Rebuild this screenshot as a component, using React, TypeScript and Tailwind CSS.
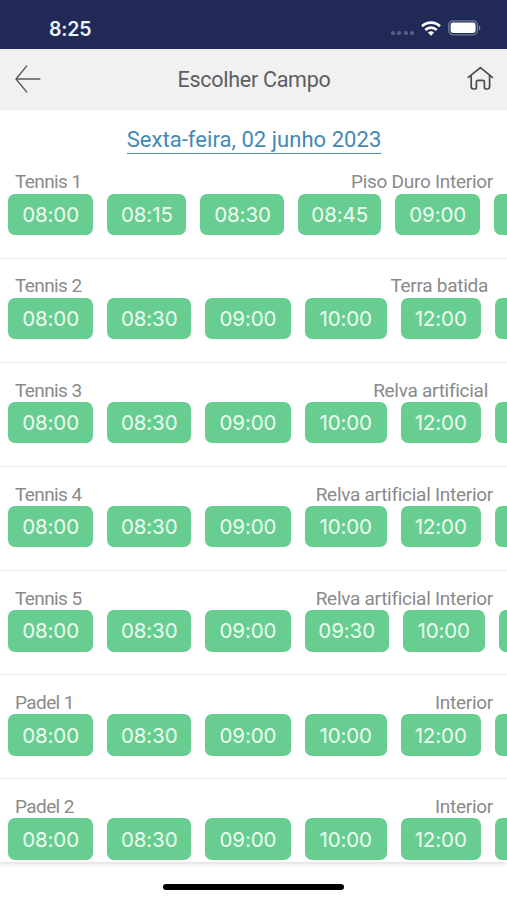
import clsx from 'clsx';

const courts = [
  {
    name: 'Tennis 1',
    surface: 'Piso Duro Interior',
    slots: ['08:00', '08:15', '08:30', '08:45', '09:00'],
  },
  {
    name: 'Tennis 2',
    surface: 'Terra batida',
    inset: true,
    slots: ['08:00', '08:30', '09:00', '10:00', '12:00'],
  },
  {
    name: 'Tennis 3',
    surface: 'Relva artificial',
    inset: true,
    slots: ['08:00', '08:30', '09:00', '10:00', '12:00'],
  },
  {
    name: 'Tennis 4',
    surface: 'Relva artificial Interior',
    slots: ['08:00', '08:30', '09:00', '10:00', '12:00'],
  },
  {
    name: 'Tennis 5',
    surface: 'Relva artificial Interior',
    slots: ['08:00', '08:30', '09:00', '09:30', '10:00'],
  },
  {
    name: 'Padel 1',
    surface: 'Interior',
    slots: ['08:00', '08:30', '09:00', '10:00', '12:00'],
  },
  {
    name: 'Padel 2',
    surface: 'Interior',
    slots: ['08:00', '08:30', '09:00', '10:00', '12:00'],
  },
];

const slotWidths: Record<string, string> = {
  '08:00': 'w-[85.2px]',
  '08:15': 'w-[79.3px]',
  '08:30': 'w-[84px]',
  '08:45': 'w-[82.5px]',
  '09:00': 'w-[85.5px]',
  '09:30': 'w-[84px]',
  '10:00': 'w-[82px]',
  '12:00': 'w-[80px]',
};

function StatusBar() {
  return (
    <div className="flex h-[48.5px] shrink-0 items-start justify-between bg-[#212a56] pr-[26px] pl-[49px]">
      <span className="mt-[17px] font-['Inter',sans-serif] text-[19.5px] leading-6 font-semibold tracking-[-0.2px] text-[#eaf4ff]">
        8:25
      </span>
      <div className="mt-5 flex h-4 items-center">
        <div className="mt-[10px] mr-[7px] flex gap-[2.4px]">
          {[0, 1, 2, 3].map((dot) => (
            <span key={dot} className="size-1 rounded-[1.5px] bg-[#565d80]" />
          ))}
        </div>
        <svg width="20" height="15" viewBox="0 0 20 15" className="mr-[7px]">
          <g fill="none" stroke="white" strokeWidth="2.7">
            <path d="M1 5.3a13 13 0 0 1 18 0" />
            <path d="M4.3 9a8.2 8.2 0 0 1 11.4 0" />
          </g>
          <path d="M7 11.6a4.4 4.4 0 0 1 6 0L10 14.8z" fill="white" />
        </svg>
        <svg width="33" height="16" viewBox="0 0 33 16">
          <rect x="0.8" y="0.8" width="28.6" height="14" rx="4.2" fill="none" stroke="#747a99" strokeWidth="1.3" />
          <rect x="2.6" y="2.6" width="25" height="10.4" rx="2.4" fill="white" />
          <path d="M30.8 5.4c2 .6 2 4.2 0 4.8z" fill="#747a99" />
        </svg>
      </div>
    </div>
  );
}

function Header() {
  return (
    <header className="flex h-[61px] shrink-0 items-center justify-between bg-[#f1f1f1] pr-[13px] pl-[14px]">
      <button className="w-7">
        <svg width="28" height="30" viewBox="0 0 28 30" fill="none" stroke="#55585c" strokeWidth="1.4">
          <path d="M13 1.6 2 15l11 13.4M2 15h24.3" />
        </svg>
      </button>
      <h1 className="pt-[3px] font-['Roboto',sans-serif] text-[21.5px] tracking-[-0.27px] text-[#5b5f63]">
        Escolher Campo
      </h1>
      <button className="w-7">
        <svg
          width="28"
          height="28"
          viewBox="0 0 28 28"
          fill="none"
          stroke="#484c50"
          strokeWidth="1.7"
          strokeLinecap="round"
          strokeLinejoin="round"
        >
          <path d="M2.3 12.4 14.4 2.6l12 9.8M5.2 10.4v11.2q0 2.4 2.4 2.4h1q1.8 0 1.8-1.8v-5.4q0-1.5 1.5-1.5h5q1.5 0 1.5 1.5v5.4q0 1.8 1.8 1.8h1q2.4 0 2.4-2.4V10.4" />
        </svg>
      </button>
    </header>
  );
}

export default function App() {
  return (
    <div className="flex h-[900px] w-[507px] flex-col overflow-hidden bg-white">
      <StatusBar />
      <Header />
      <main className="h-[752px] shrink-0 overflow-hidden shadow-[0_2px_4px_rgba(0,0,0,0.14)]">
        <div className="flex h-[45px] justify-center pt-4 pl-px">
          <a className="h-[28.5px] border-b-[1.5px] border-[#4a90b8] font-['Roboto',sans-serif] text-[22px] leading-[28px] tracking-[0.05px] text-[#4389b5]">
            Sexta-feira, 02 junho 2023
          </a>
        </div>
        {courts.map((court) => (
          <section key={court.name} className="h-[104.15px] border-b border-[#ececec] pt-[17px]">
            <div
              className={clsx(
                "flex h-[22px] items-center justify-between pl-[15px] font-['Roboto',sans-serif] text-[19px] text-[#8a8a8a]",
                court.inset ? 'pr-[19px]' : 'pr-[14px]'
              )}
            >
              <span className="tracking-[-0.6px]">{court.name}</span>
              <span className="tracking-[-0.28px]">{court.surface}</span>
            </div>
            <div className="flex gap-[14px] pl-2">
              {court.slots.map((slot) => (
                <button
                  key={slot}
                  className={clsx(
                    "h-[41.5px] shrink-0 rounded-[7px] bg-[#67cd90] pt-[2px] font-['Inter',sans-serif] text-[20.5px] tracking-[-0.1px] text-[#edfff0]",
                    slotWidths[slot]
                  )}
                >
                  {slot}
                </button>
              ))}
              <span className="h-[41.5px] w-20 shrink-0 rounded-[7px] bg-[#67cd90]" />
            </div>
          </section>
        ))}
      </main>
      <div className="flex grow justify-center pt-[22px]">
        <div className="h-[6.5px] w-[181px] rounded-full bg-black" />
      </div>
    </div>
  );
}
